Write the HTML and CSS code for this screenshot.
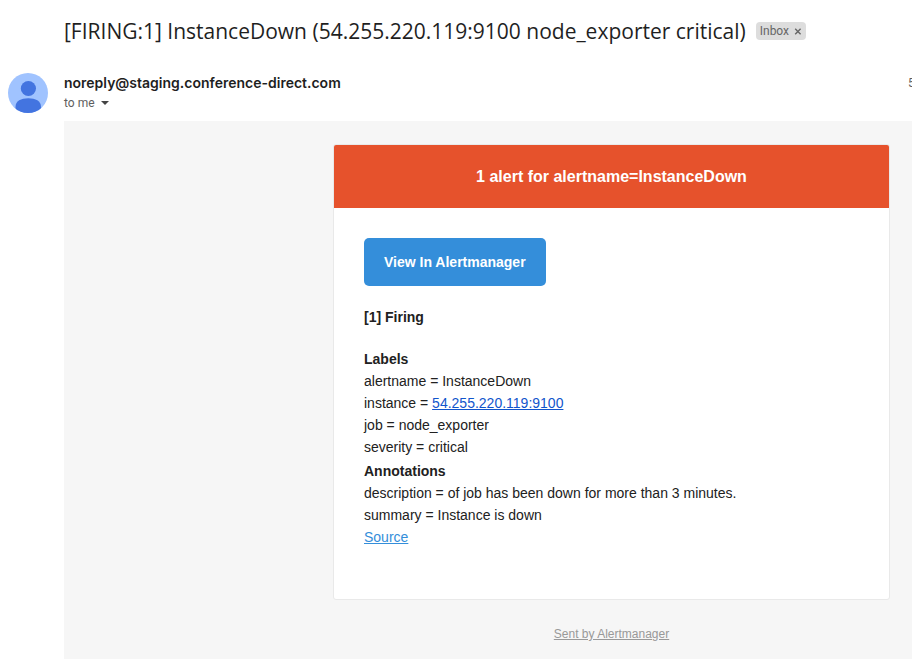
FILE: index.html
```html
<!DOCTYPE html>
<html lang="en">
<head>
<meta charset="utf-8">
<meta name="viewport" content="width=device-width, initial-scale=1">
<title>[FIRING:1] InstanceDown</title>
<link rel="stylesheet" href="styles.css">
</head>
<body>
<main class="mail">
  <header class="subject">
    <h1 class="subject-text">[FIRING:1] InstanceDown (54.255.220.119:9100 node_exporter critical)</h1>
    <span class="tag">Inbox
      <button class="tag-remove" type="button" aria-label="Remove label Inbox">
        <svg viewBox="0 0 8 8" width="8" height="8" aria-hidden="true"><path d="M1.200 1.800l5.400 5.400M6.600 1.800L1.200 7.200"/></svg>
      </button>
    </span>
  </header>

  <section class="sender">
    <svg class="avatar" viewBox="0 0 40 40" role="img" aria-label="Sender avatar">
      <defs><clipPath id="disc"><circle cx="20" cy="20" r="20"/></clipPath></defs>
      <g clip-path="url(#disc)">
        <rect width="40" height="40" fill="#a0c3ff"/>
        <circle cx="20.400" cy="15.500" r="7.600" fill="#4374e0"/>
        <path d="M7.500 34C7.500 28 13 25.300 20.300 25.300S33 28 33 34V40H7.500Z" fill="#4374e0"/>
      </g>
    </svg>
    <div class="sender-info">
      <div class="sender-name">noreply@staging.conference-direct.com</div>
      <button class="recipient" type="button">to me
        <svg viewBox="0 0 8 4" width="8" height="4" aria-hidden="true"><path d="M0 0h8L4 4z"/></svg>
      </button>
    </div>
    <div class="date">5</div>
  </section>

  <section class="message">
    <article class="card">
      <h2 class="card-head">1 alert for alertname=InstanceDown</h2>
      <div class="card-body">
        <a class="action" href="#alertmanager">View In Alertmanager</a>
        <h3 class="status">[1] Firing</h3>
        <div class="group">
          <h4>Labels</h4>
          <p>alertname = InstanceDown</p>
          <p>instance = <a class="host" href="#instance">54.255.220.119:9100</a></p>
          <p>job = node_exporter</p>
          <p>severity = critical</p>
        </div>
        <div class="group">
          <h4>Annotations</h4>
          <p>description = of job has been down for more than 3 minutes.</p>
          <p>summary = Instance is down</p>
          <p><a class="source" href="#source">Source</a></p>
        </div>
      </div>
    </article>
    <footer class="foot"><a href="#sent">Sent by Alertmanager</a></footer>
  </section>
</main>
</body>
</html>
```
FILE: styles.css
```css
* { box-sizing: border-box; }
body { margin: 0; background: #fff; color: #202124; font-family: Roboto, sans-serif; overflow-x: hidden; }
h1, h2, h3, h4, p { margin: 0; }
button { border: 0; padding: 0; background: none; font: inherit; color: inherit; }

.mail { display: flex; flex-direction: column; min-height: 100vh; }

.subject { display: flex; align-items: center; gap: 10px; padding: 17px 0 0 64px; }
.subject-text { font: 400 21px/28px "Open Sans", sans-serif; color: #1f1f1f; white-space: nowrap; }
.tag { display: flex; align-items: center; gap: 5px; height: 18px; padding: 0 4px; border-radius: 4px; background: #ddd; color: #666; font-size: 12px; }
.tag-remove { display: flex; }
.tag-remove path { fill: none; stroke: #666; stroke-width: 1.400; }

.sender { display: flex; gap: 16px; padding: 28px 0 8px 8px; }
.avatar { width: 40px; height: 40px; flex: none; }
.sender-info { flex: 1; }
.sender-name { font: 600 14px/20px Inter, sans-serif; color: #1f1f1f; }
.recipient { display: flex; align-items: center; gap: 6px; font-size: 12px; line-height: 20px; color: #5e5e5e; }
.recipient path { fill: #444; }
.date { width: 4px; overflow: hidden; font-size: 12px; line-height: 20px; color: #5e5e5e; }

.message { flex: 1; margin-left: 64px; padding: 23px 22px 16px; background: #f6f6f6; font-family: "Liberation Sans", Arial, sans-serif; display: flex; flex-direction: column; align-items: flex-end; }
.card { width: 100%; max-width: 557px; border: 1px solid #e9e9e9; border-radius: 3px; background: #fff; overflow: hidden; }
.card-head { padding: 20px; background: #e6522c; color: #fff; font-size: 16px; font-weight: 700; line-height: 23px; text-align: center; }
.card-body { padding: 30px 30px 49px; font-size: 14px; line-height: 22px; color: #212121; }
.action { display: inline-block; padding: 13px 20px; border-radius: 5px; background: #348eda; color: #fff; font-weight: 700; text-decoration: none; }
.status { margin: 20px 0; font-size: 14px; }
.group { margin-bottom: 2px; }
.group h4 { font-size: 14px; }
.host { color: #15c; }
.source { color: #348eda; }
.foot { width: 100%; max-width: 557px; padding-top: 24px; text-align: center; font-size: 12px; line-height: 20px; }
.foot a { color: #999; }
```
